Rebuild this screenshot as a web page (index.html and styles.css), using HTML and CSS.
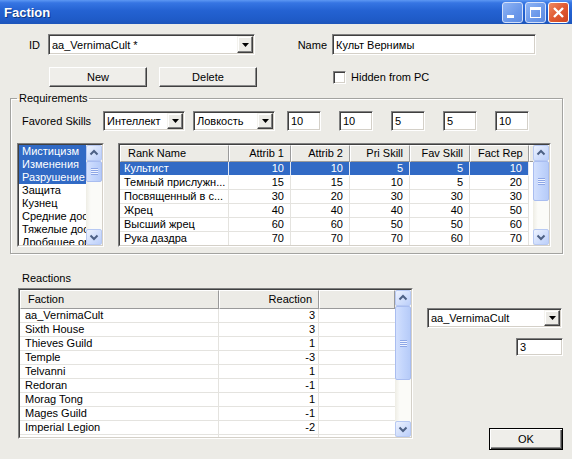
FILE: index.html
```html
<!DOCTYPE html>
<html lang="ru">
<head>
    <meta charset="UTF-8">
    <title>Faction</title>
    <link rel="stylesheet" href="styles.css">
</head>
<body>

    <div class="titlebar">
        <span class="title">Faction</span>
        <div class="caption-btns">
            <span class="cbtn cbtn-min"><svg width="19" height="19" viewBox="0 0 19 19"><rect x="4" y="12" width="7" height="3" fill="#fff"/></svg></span>
            <span class="cbtn cbtn-max"><svg width="19" height="19" viewBox="0 0 19 19"><rect x="4.5" y="4.5" width="10" height="10" fill="none" stroke="#fff"/><rect x="4" y="4" width="11" height="3" fill="#fff"/></svg></span>
            <span class="cbtn cbtn-close"><svg width="19" height="19" viewBox="0 0 19 19"><path d="M5 5 L14 14 M14 5 L5 14" stroke="#fff" stroke-width="2.4"/></svg></span>
        </div>
    </div>

    <div class="dialog">
        <!-- ID / Name -->
        <div class="row row-id">
            <span class="lbl lbl-id">ID</span>
            <div class="combo combo-id">
                <span class="combo-text">aa_VernimaCult *</span>
                <span class="drop"><svg width="7" height="4" viewBox="0 0 7 4"><polygon points="0,0 7,0 3.5,4" fill="#000"/></svg></span>
            </div>
            <span class="lbl lbl-name">Name</span>
            <div class="edit edit-name">Культ Вернимы</div>
        </div>

        <div class="row row-btns">
            <button class="btn">New</button>
            <button class="btn btn-delete">Delete</button>
            <span class="check"></span>
            <span class="check-text">Hidden from PC</span>
        </div>

        <!-- Requirements -->
        <fieldset class="group">
            <legend>Requirements</legend>

            <div class="row row-fav">
                <span class="lbl lbl-fav">Favored Skills</span>
                <div class="combo combo-attr">
                    <span class="combo-text">Интеллект</span>
                    <span class="drop"><svg width="7" height="4" viewBox="0 0 7 4"><polygon points="0,0 7,0 3.5,4" fill="#000"/></svg></span>
                </div>
                <div class="combo combo-attr combo-attr2">
                    <span class="combo-text">Ловкость</span>
                    <span class="drop"><svg width="7" height="4" viewBox="0 0 7 4"><polygon points="0,0 7,0 3.5,4" fill="#000"/></svg></span>
                </div>
                <div class="edit edit-num edit-first">10</div>
                <div class="edit edit-num">10</div>
                <div class="edit edit-num">5</div>
                <div class="edit edit-num">5</div>
                <div class="edit edit-num">10</div>
            </div>

            <div class="row row-lists">
                <div class="listview skills">
                    <div class="lv-inner">
                        <div class="lv-main">
                            <div class="item sel">Мистицизм</div>
                            <div class="item sel">Изменения</div>
                            <div class="item sel">Разрушение</div>
                            <div class="item">Защита</div>
                            <div class="item">Кузнец</div>
                            <div class="item">Средние доспехи</div>
                            <div class="item">Тяжелые доспехи</div>
                            <div class="item">Дробящее оружие</div>
                        </div>
                        <div class="vscroll">
                            <span class="sb-btn"><svg width="14" height="14" viewBox="0 0 14 14"><path d="M3.5 8.5 L7 5 L10.5 8.5" fill="none" stroke="#4d6185" stroke-width="2"/></svg></span>
                            <div class="sb-track"><span class="sb-thumb thumb-skills"><span class="grip"></span></span></div>
                            <span class="sb-btn"><svg width="14" height="14" viewBox="0 0 14 14"><path d="M3.5 5.5 L7 9 L10.5 5.5" fill="none" stroke="#4d6185" stroke-width="2"/></svg></span>
                        </div>
                    </div>
                </div>

                <div class="listview rank">
                    <div class="lv-inner">
                        <div class="lv-main">
                            <div class="lv-head">
                                <span>Rank Name</span>
                                <span class="num">Attrib 1</span>
                                <span class="num">Attrib 2</span>
                                <span class="num">Pri Skill</span>
                                <span class="num">Fav Skill</span>
                                <span class="num">Fact Rep</span>
                                <span class="blank"></span>
                            </div>
                            <div class="lv-row sel"><span>Культист</span><span class="num">10</span><span class="num">10</span><span class="num">5</span><span class="num">5</span><span class="num">10</span><span class="blank"></span></div>
                            <div class="lv-row"><span>Темный прислужн...</span><span class="num">15</span><span class="num">15</span><span class="num">10</span><span class="num">5</span><span class="num">20</span><span class="blank"></span></div>
                            <div class="lv-row"><span>Посвященный в с...</span><span class="num">30</span><span class="num">20</span><span class="num">30</span><span class="num">30</span><span class="num">30</span><span class="blank"></span></div>
                            <div class="lv-row"><span>Жрец</span><span class="num">40</span><span class="num">40</span><span class="num">40</span><span class="num">40</span><span class="num">50</span><span class="blank"></span></div>
                            <div class="lv-row"><span>Высший жрец</span><span class="num">60</span><span class="num">60</span><span class="num">50</span><span class="num">50</span><span class="num">60</span><span class="blank"></span></div>
                            <div class="lv-row"><span>Рука даздра</span><span class="num">70</span><span class="num">70</span><span class="num">70</span><span class="num">60</span><span class="num">70</span><span class="blank"></span></div>
                        </div>
                        <div class="vscroll">
                            <span class="sb-btn"><svg width="14" height="14" viewBox="0 0 14 14"><path d="M3.5 8.5 L7 5 L10.5 8.5" fill="none" stroke="#4d6185" stroke-width="2"/></svg></span>
                            <div class="sb-track"><span class="sb-thumb thumb-rank"><span class="grip"></span></span></div>
                            <span class="sb-btn"><svg width="14" height="14" viewBox="0 0 14 14"><path d="M3.5 5.5 L7 9 L10.5 5.5" fill="none" stroke="#4d6185" stroke-width="2"/></svg></span>
                        </div>
                    </div>
                </div>
            </div>
        </fieldset>

        <!-- Reactions -->
        <div class="reactions">
            <div class="react-left">
                <div class="react-label">Reactions</div>
                <div class="listview react">
                    <div class="lv-inner">
                        <div class="lv-main">
                            <div class="lv-head">
                                <span class="first">Faction</span>
                                <span class="num">Reaction</span>
                                <span class="blank"></span>
                            </div>
                            <div class="lv-row"><span>aa_VernimaCult</span><span class="num">3</span><span class="blank"></span></div>
                            <div class="lv-row"><span>Sixth House</span><span class="num">3</span><span class="blank"></span></div>
                            <div class="lv-row"><span>Thieves Guild</span><span class="num">1</span><span class="blank"></span></div>
                            <div class="lv-row"><span>Temple</span><span class="num">-3</span><span class="blank"></span></div>
                            <div class="lv-row"><span>Telvanni</span><span class="num">1</span><span class="blank"></span></div>
                            <div class="lv-row"><span>Redoran</span><span class="num">-1</span><span class="blank"></span></div>
                            <div class="lv-row"><span>Morag Tong</span><span class="num">1</span><span class="blank"></span></div>
                            <div class="lv-row"><span>Mages Guild</span><span class="num">-1</span><span class="blank"></span></div>
                            <div class="lv-row"><span>Imperial Legion</span><span class="num">-2</span><span class="blank"></span></div>
                            <div class="lv-row"><span>Hlaalu</span><span class="num">0</span><span class="blank"></span></div>
                        </div>
                        <div class="vscroll">
                            <span class="sb-btn"><svg width="14" height="14" viewBox="0 0 14 14"><path d="M3.5 8.5 L7 5 L10.5 8.5" fill="none" stroke="#4d6185" stroke-width="2"/></svg></span>
                            <div class="sb-track"><span class="sb-thumb thumb-react"><span class="grip"></span></span></div>
                            <span class="sb-btn"><svg width="14" height="14" viewBox="0 0 14 14"><path d="M3.5 5.5 L7 9 L10.5 5.5" fill="none" stroke="#4d6185" stroke-width="2"/></svg></span>
                        </div>
                    </div>
                </div>
            </div>

            <div class="react-right">
                <div class="combo combo-faction">
                    <span class="combo-text">aa_VernimaCult</span>
                    <span class="drop"><svg width="7" height="4" viewBox="0 0 7 4"><polygon points="0,0 7,0 3.5,4" fill="#000"/></svg></span>
                </div>
                <div class="edit edit-react">3</div>
                <button class="btn btn-ok">OK</button>
            </div>
        </div>
    </div>

</body>
</html>
```

FILE: styles.css
```css
* {
    box-sizing: border-box;
}

body {
    margin: 0;
    width: 572px;
    height: 459px;
    overflow: hidden;
    background-color: #ecebe6;
    font-family: "Liberation Sans", Arial, sans-serif;
    font-size: 11px;
    color: #000;
}

/* title bar */
.titlebar {
    height: 24px;
    display: flex;
    align-items: center;
    justify-content: space-between;
    padding: 0 3px 0 4px;
    background: linear-gradient(180deg, #5d98f3 0%, #3675e3 12%, #2462d2 45%, #1f5bc8 80%, #1d55ba 100%);
}

.title {
    color: #fff;
    font-weight: bold;
    font-size: 13px;
    text-shadow: 1px 1px #10397f;
}

.caption-btns {
    display: flex;
    gap: 2px;
}

.cbtn {
    width: 21px;
    height: 21px;
    border: 1px solid #e6eefc;
    border-radius: 3px;
    display: flex;
}

.cbtn-min,
.cbtn-max {
    background: linear-gradient(135deg, #8fb4f4 0%, #6b98ea 60%, #5d8be2 100%);
    border-color: #d3e0fa;
}

.cbtn-close {
    background: linear-gradient(135deg, #ef8a62 0%, #e05a32 50%, #cf4520 100%);
    border-color: #fff;
}

/* dialog body */
.dialog {
    padding-top: 10px;
}

.row {
    display: flex;
    align-items: center;
}

.lbl {
    white-space: nowrap;
}

.row-id {
    height: 21px;
}

.lbl-id {
    width: 40px;
    text-align: right;
    margin-right: 8px;
}

.lbl-name {
    width: 72px;
    text-align: right;
    margin-right: 5px;
}

/* sunken edit field */
.edit {
    background: #fff;
    border: 1px solid;
    border-color: #808080 #fff #fff #808080;
    box-shadow: inset 1px 1px #404040, inset -1px -1px #d4d0c8;
    padding-left: 3px;
    display: flex;
    align-items: center;
    white-space: nowrap;
}

.edit-name {
    width: 204px;
    height: 21px;
}

/* combobox */
.combo {
    display: flex;
    background: #fff;
    border: 1px solid;
    border-color: #808080 #fff #fff #808080;
    box-shadow: inset 1px 1px #404040, inset -1px -1px #d4d0c8;
}

.combo-text {
    flex: 1;
    padding-left: 3px;
    display: flex;
    align-items: center;
    white-space: nowrap;
    overflow: hidden;
}

.drop {
    width: 16px;
    margin: 1px;
    background: #ecebe6;
    border: 1px solid;
    border-color: #f4f3ee #404040 #404040 #f4f3ee;
    box-shadow: inset -1px -1px #808080, inset 1px 1px #fff;
    display: flex;
    align-items: center;
    justify-content: center;
}

.combo-id {
    width: 207px;
    height: 21px;
}

/* buttons */
.row-btns {
    height: 20px;
    margin-top: 12px;
    padding-left: 49px;
}

.btn {
    width: 98px;
    height: 20px;
    padding: 0;
    font-family: inherit;
    font-size: 11px;
    color: #000;
    background: #efeeea;
    border: 1px solid;
    border-color: #fff #404040 #404040 #fff;
    box-shadow: inset -1px -1px #8c8c8c;
}

.btn-delete {
    margin-left: 12px;
}

.check {
    width: 13px;
    height: 13px;
    margin-left: 76px;
    background: #fff;
    border: 1px solid;
    border-color: #808080 #fff #fff #808080;
    box-shadow: inset 1px 1px #404040, inset -1px -1px #d4d0c8;
}

.check-text {
    margin-left: 5px;
}

/* requirements group */
.group {
    margin: 5px 9px 0 10px;
    padding: 6px 11px 6px 6px;
    border: 1px solid #a3a3a0;
    box-shadow: inset 1px 1px #fff, 1px 1px #fff;
}

.group legend {
    padding: 0 2px;
    line-height: 13px;
}

.row-fav {
    height: 20px;
}

.lbl-fav {
    width: 86px;
    padding-left: 5px;
}

.combo-attr {
    width: 82px;
    height: 20px;
}

.combo-attr2 {
    margin-left: 8px;
}

.edit-num {
    width: 34px;
    height: 20px;
    margin-left: 18px;
}

.edit-num.edit-first {
    margin-left: 12px;
}

.row-lists {
    align-items: flex-start;
    margin-top: 12px;
}

/* list views */
.listview {
    border: 1px solid;
    border-color: #808080 #fff #fff #808080;
}

.lv-inner {
    height: 100%;
    display: flex;
    background: #fff;
    border: 1px solid;
    border-color: #404040 #d4d0c8 #d4d0c8 #404040;
}

.lv-main {
    flex: 1;
    overflow: hidden;
}

.skills {
    width: 87px;
    height: 104px;
}

.item {
    height: 13px;
    line-height: 13px;
    padding-left: 3px;
    white-space: nowrap;
    overflow: hidden;
}

.item.sel {
    background: #316ac5;
    color: #fff;
}

.rank {
    width: 433px;
    height: 104px;
    margin-left: 14px;
}

.lv-head,
.lv-row {
    display: grid;
}

.rank .lv-head,
.rank .lv-row {
    grid-template-columns: 109px 62px 59px 60px 60px 59px 1fr;
}

.react .lv-head,
.react .lv-row {
    grid-template-columns: 199px 100px 1fr;
}

.lv-head span {
    height: 17px;
    line-height: 15px;
    padding: 0 6px 0 7px;
    background: #ecebe6;
    border-top: 1px solid #fff;
    border-left: 1px solid #fff;
    border-right: 1px solid #9a9a9a;
    border-bottom: 1px solid #9a9a9a;
    white-space: nowrap;
    overflow: hidden;
}

.react .lv-head span {
    height: 19px;
    line-height: 17px;
}

.lv-row span {
    height: 14px;
    line-height: 13px;
    padding: 0 6px 0 4px;
    border-right: 1px solid #e4e3df;
    border-bottom: 1px solid #e4e3df;
    white-space: nowrap;
    overflow: hidden;
}

.react .lv-row span {
    padding: 0 3px 0 5px;
}

.lv-row span.blank {
    border-right: none;
}

.rank .lv-row span.blank {
    border-bottom: none;
}

.num {
    text-align: right;
}

.lv-row.sel span:not(.blank) {
    background: #316ac5;
    color: #fff;
    border-right-color: #dfe6f3;
    border-bottom-color: #fff;
}

/* XP scrollbar */
.vscroll {
    width: 16px;
    display: flex;
    flex-direction: column;
    background: linear-gradient(90deg, #eeede5 0%, #fbfbf8 30%, #fbfbf8 100%);
}

.sb-btn {
    height: 16px;
    flex: none;
    border: 1px solid #b7c9f3;
    border-radius: 2px;
    background: linear-gradient(135deg, #eef3fe 0%, #d3e0fc 50%, #bccffa 100%);
    display: flex;
    align-items: center;
    justify-content: center;
}

.sb-track {
    flex: 1;
}

.sb-thumb {
    display: flex;
    align-items: center;
    justify-content: center;
    border: 1px solid #a9bdf0;
    border-radius: 2px;
    background: linear-gradient(90deg, #d3e0fd 0%, #c3d5fc 50%, #b6cbf8 100%);
}

.thumb-skills {
    height: 21px;
}

.thumb-rank {
    height: 40px;
}

.thumb-react {
    height: 74px;
}

.grip {
    width: 7px;
    height: 7px;
    background: repeating-linear-gradient(180deg, #8da6e6 0 1px, #eef3ff 1px 2px);
}

/* reactions */
.reactions {
    display: flex;
    padding-left: 18px;
    margin-top: 18px;
}

.react-label {
    height: 13px;
    line-height: 13px;
    padding-left: 4px;
}

.react {
    width: 395px;
    height: 151px;
    margin-top: 3px;
}

.react-right {
    width: 136px;
    margin-left: 14px;
    padding-top: 36px;
    display: flex;
    flex-direction: column;
    align-items: flex-end;
}

.combo-faction {
    width: 135px;
    height: 20px;
    align-self: flex-start;
}

.edit-react {
    width: 47px;
    height: 18px;
    margin-top: 10px;
}

.btn-ok {
    width: 74px;
    height: 22px;
    margin-top: 72px;
    border: 1px solid #000;
    box-shadow: inset 1px 1px #fff, inset -1px -1px #404040, inset -2px -2px #8c8c8c;
}
```
